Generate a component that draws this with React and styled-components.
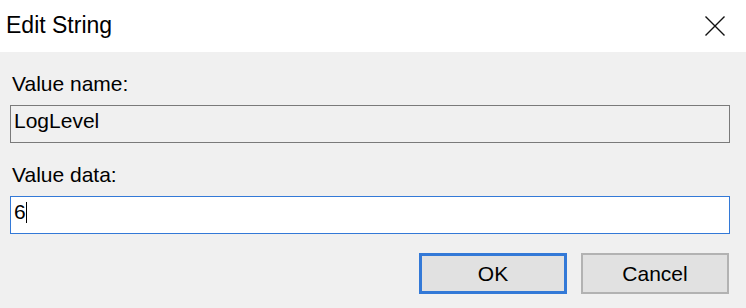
import styled, { createGlobalStyle } from "styled-components";

const GlobalStyle = createGlobalStyle`
  html, body {
    margin: 0;
    padding: 0;
    background: #f0f0f0;
  }
  body {
    font-family: "Liberation Sans", Arial, sans-serif;
    color: #000;
  }
`;

const App = () => {
  return (
    <>
      <GlobalStyle />
      <Dialog>
        <TitleBar>
          <Title>Edit String</Title>
          <CloseButton aria-label="Close">
            <svg width="20" height="20" viewBox="0 0 20 20">
              <path d="M0.5 0.5 L19.5 19.5 M19.5 0.5 L0.5 19.5" stroke="#111" strokeWidth="1.4" fill="none" />
            </svg>
          </CloseButton>
        </TitleBar>

        <Body>
          <Label>Value name:</Label>
          <Field readOnly>LogLevel</Field>

          <Label $top={20}>Value data:</Label>
          <Field $focused>
            6<Caret />
          </Field>

          <Actions>
            <Button $default>OK</Button>
            <Button>Cancel</Button>
          </Actions>
        </Body>
      </Dialog>
    </>
  );
};

export default App;

const Dialog = styled.div`
  width: 746px;
  height: 308px;
  display: flex;
  flex-direction: column;
  background: #f0f0f0;
  overflow: hidden;
`;

const TitleBar = styled.div`
  flex: 0 0 52px;
  display: flex;
  align-items: center;
  justify-content: space-between;
  background: #fff;
  padding: 0 21px 0 6px;
  box-sizing: border-box;
`;

const Title = styled.div`
  font-size: 23px;
  line-height: 26px;
  margin-top: -2px;
`;

const CloseButton = styled.div`
  width: 20px;
  height: 20px;
  display: flex;

  svg {
    display: block;
  }
`;

const Body = styled.div`
  display: flex;
  flex-direction: column;
  padding: 20px 16px 0 10px;
`;

const Label = styled.div`
  font-size: 21px;
  line-height: 24px;
  padding-left: 2px;
  margin-top: ${(p) => (p.$top ? `${p.$top}px` : "0")};
  margin-bottom: 9px;
`;

const Field = styled.div`
  position: relative;
  height: 38px;
  box-sizing: border-box;
  display: flex;
  align-items: flex-start;
  padding: 3px 3px 0;
  font-size: 21px;
  line-height: 24px;
  border: 1px solid ${(p) => (p.$focused ? "#3379d7" : "#7a7a7a")};
  background: ${(p) => (p.readOnly ? "#f0f0f0" : "#fff")};
`;

const Caret = styled.span`
  display: inline-block;
  width: 1px;
  height: 21px;
  margin-top: 2px;
  margin-left: 0px;
  background: #000;
`;

const Actions = styled.div`
  display: flex;
  justify-content: flex-end;
  gap: 14px;
  margin-top: 19px;
  padding-right: 1px;
`;

const Button = styled.div`
  width: 148px;
  height: 41px;
  box-sizing: border-box;
  display: flex;
  align-items: center;
  justify-content: center;
  font-size: 21px;
  background: #e1e1e1;
  border: ${(p) => (p.$default ? "3px solid #3379d7" : "2px solid #b2b2b2")};
`;
